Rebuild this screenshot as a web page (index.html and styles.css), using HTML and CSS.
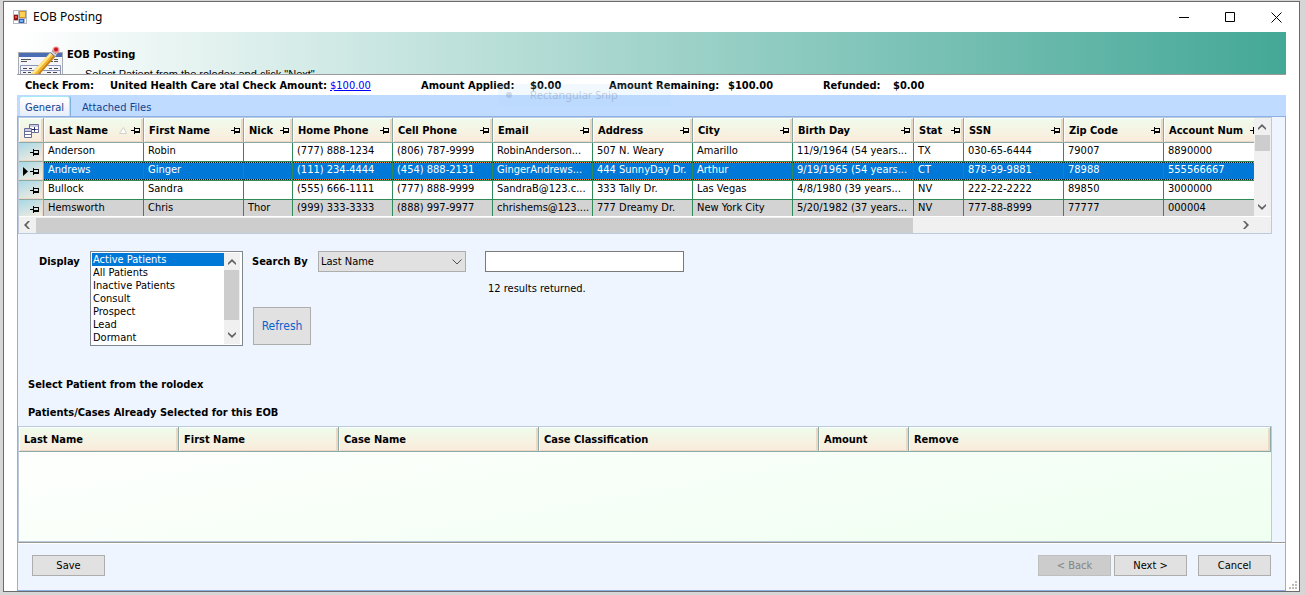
FILE: index.html
```html
<!DOCTYPE html>
<html lang="en">
<head>
    <meta charset="UTF-8">
    <meta name="viewport" content="width=device-width, initial-scale=1.0">
    <title>EOB Posting</title>
    <link rel="stylesheet" href="styles.css">
</head>
<body>
    <!-- Shared icons -->
    <svg class="sprite" aria-hidden="true">
        <symbol id="pin" viewBox="0 0 9 7">
            <path d="M0 3h3v1H0zM3 0h1v7H3zM4 1h5v1H4zM8 2h1v4H8zM4 4h4v2H4z"/>
        </symbol>
        <symbol id="chevron-up" viewBox="0 0 8 6">
            <path d="M4 0l4 4v2L4 2.500 0 6V4z"/>
        </symbol>
        <symbol id="chevron-down" viewBox="0 0 8 6">
            <path d="M4 6l4-4V0L4 3.500 0 0v2z"/>
        </symbol>
        <symbol id="chevron-left" viewBox="0 0 6 8">
            <path d="M0 4l4 4h2L2.500 4 6 0H4z"/>
        </symbol>
        <symbol id="chevron-right" viewBox="0 0 6 8">
            <path d="M6 4L2 8H0l3.500-4L0 0h2z"/>
        </symbol>
    </svg>

    <div class="window">
        <header class="titlebar">
            <svg class="app-icon" viewBox="0 0 14 14">
                <rect width="14" height="14" fill="#b4b8c2"/>
                <path d="M1 1h4v3H1zM1 11h4v2H1zM12 9h1v4h-1z" fill="#fff"/>
                <rect x="6" y="1" width="7" height="7" fill="#d3961c"/>
                <rect x="7" y="2" width="5" height="5" fill="#ffd257"/>
                <rect x="1" y="5" width="4" height="5" fill="#9c1010"/>
                <rect x="2" y="6" width="2" height="2" fill="#e8553d"/>
                <rect x="6" y="9" width="5" height="4" fill="#2f62c4"/>
                <rect x="7" y="10" width="3" height="2" fill="#76b0f5"/>
            </svg>
            <span class="title">EOB Posting</span>
            <button class="win-btn" aria-label="Minimize"><svg width="11" height="11"><path d="M0 5.500h10"/></svg></button>
            <button class="win-btn" aria-label="Maximize"><svg width="11" height="11"><path d="M.5.5h9v9h-9z"/></svg></button>
            <button class="win-btn" aria-label="Close"><svg width="11" height="11"><path d="M.5.5l10 10M10.500.5l-10 10"/></svg></button>
        </header>

        <div class="client">
            <div class="banner">
                <svg class="banner-icon" viewBox="0 0 45 29">
                    <rect x="0" y="6" width="45" height="23" fill="#a9adb3"/>
                    <rect x="1" y="7" width="43" height="4" fill="#4a6db3"/>
                    <rect x="1" y="11" width="43" height="18" fill="#f3f5fa"/>
                    <path d="M3 13.500h10M3 15.500h6M32 13.500h3m1 0h4M32 15.500h3m1 0h4" stroke="#555"/>
                    <path d="M2.500 19.500h40v9.500h-40zM2 24.500h41M22.500 19v10" fill="none" stroke="#8d97b8"/>
                    <path d="M5 22.500h4m2 0h3M31 22.500h3m2 0h4M5 26.500h3m2 0h3M29 26.500h4m2 0h4" stroke="#444"/>
                    <path d="M11 30L32 7l5 4-17 19z" fill="#f2b632"/>
                    <path d="M11 30L32 7l2 1.500L14.500 30z" fill="#ffe88e"/>
                    <path d="M37 11L20 30h-2L35.500 9.700z" fill="#c5811b"/>
                    <path d="M32 7l3-3.500 4.500 4L37 11z" fill="#dfe2e6"/>
                    <path d="M32.500 6.500l4.500 4M34 4.500l4.500 4" stroke="#666"/>
                    <circle cx="38" cy="4" r="3.500" fill="#e79a9a"/>
                    <circle cx="38" cy="3.500" r="2" fill="#d0141f"/>
                </svg>
                <div class="banner-text">
                    <h1>EOB Posting</h1>
                    <p>Select Patient from the rolodex and click "Next".</p>
                </div>
            </div>

            <div class="summary">
                <b>Check From:</b>
                <b>United Health Care</b>
                <b class="clipped"><span>Total Check Amount:</span></b>
                <a href="#">$100.00</a>
                <b>Amount Applied:</b>
                <b>$0.00</b>
                <b>Amount Remaining:</b>
                <b>$100.00</b>
                <b>Refunded:</b>
                <b>$0.00</b>
                <div class="snip-hint"><i></i><span>Rectangular Snip</span></div>
            </div>

            <nav class="tabs">
                <a class="tab active" href="#">General</a>
                <a class="tab" href="#">Attached Files</a>
            </nav>

            <main class="panel">
                <!-- Patient rolodex -->
                <div class="grid">
                    <div class="grid-main">
                        <div class="grid-view">
                            <table class="patients">
                                <colgroup>
                                    <col class="w25"><col class="w100"><col class="w100"><col class="w49"><col class="w100"><col class="w100"><col class="w100"><col class="w100"><col class="w100"><col class="w121"><col class="w50"><col class="w100"><col class="w100"><col>
                                </colgroup>
                                <thead>
                                    <tr>
                                        <th class="chooser">
                                            <svg width="15" height="14" fill="none" stroke="#6c6c98">
                                                <path d="M5.500.5h9v8h-9zM10.500 3v5M5 5.500h9" fill="#fff"/>
                                                <path d="M6 1h8v2H6z" fill="#c9cbe4" stroke="none"/>
                                                <path d="M.5 4.500h7v9h-7zM0 7.500h7M0 10.500h7" fill="#fff"/>
                                                <path d="M1 5h6v2H1z" fill="#c9cbe4" stroke="none"/>
                                                <path d="M8 5.500h3.500M10.500 3.500v3" stroke="#22225a"/>
                                            </svg>
                                        </th>
                                        <th><div>Last Name <svg class="sort" width="8" height="7"><path d="M.5 6.500h7L4.500.5z"/></svg><svg class="pin"><use href="#pin"/></svg></div></th>
                                        <th><div>First Name <svg class="pin"><use href="#pin"/></svg></div></th>
                                        <th><div>Nick <svg class="pin"><use href="#pin"/></svg></div></th>
                                        <th><div>Home Phone <svg class="pin"><use href="#pin"/></svg></div></th>
                                        <th><div>Cell Phone <svg class="pin"><use href="#pin"/></svg></div></th>
                                        <th><div>Email <svg class="pin"><use href="#pin"/></svg></div></th>
                                        <th><div>Address <svg class="pin"><use href="#pin"/></svg></div></th>
                                        <th><div>City <svg class="pin"><use href="#pin"/></svg></div></th>
                                        <th><div>Birth Day <svg class="pin"><use href="#pin"/></svg></div></th>
                                        <th><div>Stat <svg class="pin"><use href="#pin"/></svg></div></th>
                                        <th><div>SSN <svg class="pin"><use href="#pin"/></svg></div></th>
                                        <th><div>Zip Code <svg class="pin"><use href="#pin"/></svg></div></th>
                                        <th><div>Account Num <svg class="pin"><use href="#pin"/></svg></div></th>
                                    </tr>
                                </thead>
                                <tbody>
                                    <tr>
                                        <td class="row-head"><svg class="pin"><use href="#pin"/></svg></td>
                                        <td>Anderson</td><td>Robin</td><td></td><td>(777) 888-1234</td><td>(806) 787-9999</td><td>RobinAnderson...</td><td>507 N. Weary</td><td>Amarillo</td><td>11/9/1964 (54 years...</td><td>TX</td><td>030-65-6444</td><td>79007</td><td>8890000</td>
                                    </tr>
                                    <tr class="selected">
                                        <td class="row-head"><svg class="arrow" width="5" height="9"><path d="M0 0l5 4.500L0 9z"/></svg><svg class="pin"><use href="#pin"/></svg></td>
                                        <td>Andrews</td><td>Ginger</td><td></td><td>(111) 234-4444</td><td>(454) 888-2131</td><td>GingerAndrews...</td><td>444 SunnyDay Dr.</td><td>Arthur</td><td>9/19/1965 (54 years...</td><td>CT</td><td>878-99-9881</td><td>78988</td><td>555566667</td>
                                    </tr>
                                    <tr>
                                        <td class="row-head"><svg class="pin"><use href="#pin"/></svg></td>
                                        <td>Bullock</td><td>Sandra</td><td></td><td>(555) 666-1111</td><td>(777) 888-9999</td><td>SandraB@123.c...</td><td>333 Tally Dr.</td><td>Las Vegas</td><td>4/8/1980 (39 years...</td><td>NV</td><td>222-22-2222</td><td>89850</td><td>3000000</td>
                                    </tr>
                                    <tr class="inactive">
                                        <td class="row-head"><svg class="pin"><use href="#pin"/></svg></td>
                                        <td>Hemsworth</td><td>Chris</td><td>Thor</td><td>(999) 333-3333</td><td>(888) 997-9977</td><td>chrishems@123....</td><td>777 Dreamy Dr.</td><td>New York City</td><td>5/20/1982 (37 years...</td><td>NV</td><td>777-88-8999</td><td>77777</td><td>000004</td>
                                    </tr>
                                </tbody>
                            </table>
                        </div>
                        <div class="vscroll">
                            <svg width="8" height="6"><use href="#chevron-up"/></svg>
                            <div class="track"><div class="thumb"></div></div>
                            <svg width="8" height="6"><use href="#chevron-down"/></svg>
                        </div>
                    </div>
                    <div class="hscroll">
                        <svg width="6" height="8"><use href="#chevron-left"/></svg>
                        <div class="track"><div class="thumb"></div></div>
                        <svg width="6" height="8"><use href="#chevron-right"/></svg>
                    </div>
                </div>

                <!-- Filters -->
                <form class="filters">
                    <label class="display-label" for="display">Display</label>
                    <div class="listbox">
                        <select id="display" size="7">
                            <option selected>Active Patients</option>
                            <option>All Patients</option>
                            <option>Inactive Patients</option>
                            <option>Consult</option>
                            <option>Prospect</option>
                            <option>Lead</option>
                            <option>Dormant</option>
                        </select>
                        <div class="vscroll tall">
                            <svg width="8" height="6"><use href="#chevron-up"/></svg>
                            <div class="track"><div class="thumb"></div></div>
                            <svg width="8" height="6"><use href="#chevron-down"/></svg>
                        </div>
                    </div>
                    <div class="search">
                        <div class="search-row">
                            <label for="search-by">Search By</label>
                            <div class="combo">
                                <select id="search-by"><option>Last Name</option></select>
                                <svg width="10" height="6"><path d="M.5.5l4.500 4.500L9.500.5"/></svg>
                            </div>
                            <div class="search-box">
                                <input type="text" id="search-text" aria-label="Search text">
                                <span>12 results returned.</span>
                            </div>
                        </div>
                        <button type="button" class="btn refresh">Refresh</button>
                    </div>
                </form>

                <h2>Select Patient from the rolodex</h2>
                <h2 class="second">Patients/Cases Already Selected for this EOB</h2>

                <!-- Selected cases, empty for now -->
                <div class="grid cases-grid">
                    <table class="cases">
                        <colgroup><col class="w160"><col class="w160"><col class="w200"><col class="w280"><col class="w90"><col></colgroup>
                        <thead>
                            <tr>
                                <th>Last Name</th>
                                <th>First Name</th>
                                <th>Case Name</th>
                                <th>Case Classification</th>
                                <th>Amount</th>
                                <th>Remove</th>
                            </tr>
                        </thead>
                    </table>
                </div>

                <footer class="actions">
                    <button class="btn save">Save</button>
                    <button class="btn" disabled>&lt; Back</button>
                    <button class="btn">Next &gt;</button>
                    <button class="btn cancel">Cancel</button>
                </footer>
            </main>
        </div>
        <svg class="grip" width="9" height="9"><path d="M6 0h2v2H6zM3 3h2v2H3zM6 3h2v2H6zM0 6h2v2H0zM3 6h2v2H3zM6 6h2v2H6z"/></svg>
    </div>
</body>
</html>
```

FILE: styles.css
```css
* {
    box-sizing: border-box;
}
body {
    margin: 0;
    height: 100vh;
    padding: 1px 5px 3px 3px;
    background-color: #d6d6d6;
    font-family: "DejaVu Sans Condensed", "Noto Sans", sans-serif;
    font-size: 11px;
    line-height: 16px;
    color: #000;
}
button, input, select {
    font: inherit;
    color: inherit;
}
svg {
    display: block;
    flex: none;
}
.sprite {
    position: absolute;
    width: 0;
    height: 0;
}
.window {
    position: relative;
    height: 100%;
    display: flex;
    flex-direction: column;
    border: 1px solid #6b6b6b;
    background-color: #fff;
}

/* Title bar */
.titlebar {
    display: flex;
    align-items: center;
    height: 30px;
    flex: none;
    padding-left: 9px;
}
.app-icon {
    width: 14px;
    height: 14px;
}
.title {
    flex: 1;
    margin-left: 6px;
    font-family: "Noto Sans", sans-serif;
    font-size: 12px;
}
.win-btn {
    display: flex;
    align-items: center;
    justify-content: center;
    width: 46px;
    height: 30px;
    padding: 0;
    border: none;
    background: none;
}
.win-btn svg {
    fill: none;
    stroke: #000;
}
.client {
    flex: 1;
    min-height: 0;
    display: flex;
    flex-direction: column;
    padding: 0 13px;
}

/* Banner */
.banner {
    display: flex;
    height: 43px;
    flex: none;
    overflow: hidden;
    padding-left: 1px;
    border-bottom: 1px solid #9a9a9a;
    background: linear-gradient(90deg, #fff, #44a897);
}
.banner-icon {
    width: 45px;
    height: 29px;
    margin-top: 14px;
}
.banner-text {
    padding: 15px 0 0 4px;
}
h1, h2 {
    margin: 0;
    font-size: 11px;
}
.banner-text p {
    margin: 3px 0 0 18px;
    font-family: "Liberation Sans", sans-serif;
    white-space: nowrap;
}

/* Check summary */
.summary {
    position: relative;
    display: grid;
    grid-template-columns: 85px 110px 107px 94px 109px 79px 119px 95px 70px auto;
    height: 20px;
    flex: none;
    padding: 3px 0 0 8px;
    white-space: nowrap;
}
.summary a {
    padding-left: 3px;
    color: #00f;
}
.clipped {
    display: flex;
    justify-content: flex-end;
    overflow: hidden;
}
.snip-hint {
    position: absolute;
    left: 481px;
    top: 9px;
    z-index: 1;
    display: flex;
    align-items: center;
    width: 173px;
    height: 22px;
    background-color: rgba(170, 215, 250, 0.16);
    font-family: "Noto Sans", sans-serif;
    font-size: 11px;
    color: rgba(110, 120, 160, 0.35);
}
.snip-hint i {
    width: 6px;
    height: 6px;
    margin: 0 18px 0 8px;
    border-radius: 50%;
    background-color: rgba(110, 120, 160, 0.25);
}

/* Tabs */
.tabs {
    display: flex;
    height: 22px;
    flex: none;
    padding: 1px 0 0 2px;
    border-bottom: 1px solid #8db0e6;
    background-color: #bfdbff;
}
.tab {
    padding: 3px 5px 0 5px;
    color: #15428b;
    text-decoration: none;
    border: 1px solid transparent;
    border-bottom: none;
}
.tab + .tab {
    margin-left: 6px;
}
.tab.active {
    border-color: #a3eaf5;
    border-radius: 3px 3px 0 0;
    background: linear-gradient(#fff, #e6effa);
    box-shadow: 1px 0 0 #7fb2d8;
}

/* Main panel */
.panel {
    flex: 1;
    min-height: 0;
    display: flex;
    flex-direction: column;
    border: 1px solid #8db0e6;
    border-top: none;
    background-color: #eef5fe;
}
.grid {
    flex: none;
    margin-right: 13px;
    border: 1px solid #b9cbdc;
    background-color: #fff;
}
.grid-main {
    display: flex;
    height: 99px;
    border-bottom: 1px solid #fff;
}
.grid-view {
    flex: 1;
    min-width: 0;
    overflow: hidden;
}
table {
    width: 100%;
    table-layout: fixed;
    border-collapse: separate;
    border-spacing: 0;
}
.patients {
    width: calc(100% + 9px);
}
.w25 { width: 25px; }
.w49 { width: 49px; }
.w50 { width: 50px; }
.w90 { width: 90px; }
.w100 { width: 100px; }
.w121 { width: 121px; }
.w160 { width: 160px; }
.w200 { width: 200px; }
.w280 { width: 280px; }
th {
    height: 25px;
    padding: 1px 3px 0 5px;
    border-right: 1px solid #8aa9a7;
    border-bottom: 1px solid #8aa9a7;
    background: linear-gradient(#effcec, #fbebdb);
    box-shadow: inset 1px 1px 0 #fff, inset -2px -1px 0 #ecd9c5;
    text-align: left;
    white-space: nowrap;
}
th div {
    display: flex;
    align-items: center;
}
.pin {
    width: 9px;
    height: 7px;
    margin-left: auto;
}
.sort {
    margin-left: auto;
    fill: #fff;
    stroke: #d0d3c8;
}
.sort + .pin {
    margin-left: 4px;
}
td {
    height: 19px;
    padding: 0 0 3px 4px;
    border-right: 1px solid #2e8b57;
    border-bottom: 1px solid #2e8b57;
    line-height: 15px;
    white-space: nowrap;
    overflow: hidden;
}
.row-head {
    padding: 0 4px 0 4px;
    border-color: #8aa9a7;
    background: linear-gradient(160deg, #a8d8e6, #fbeedf);
    box-shadow: inset -1px -1px 0 #ecd9c5;
}
.arrow {
    float: left;
}
.row-head .pin {
    float: right;
    margin-top: 1px;
}
.selected td:not(.row-head) {
    color: #fff;
    background:
        repeating-linear-gradient(90deg, #1a1a1a 0 1px, #ff9430 1px 2px) top / 100% 1px no-repeat,
        repeating-linear-gradient(90deg, #1a1a1a 0 1px, #ff9430 1px 2px) bottom / 100% 1px no-repeat,
        #0078d7;
    background-clip: padding-box;
}
.inactive td:not(.row-head) {
    background-color: #d3d3d3;
}

/* Scroll bars */
.vscroll, .hscroll {
    display: flex;
    align-items: center;
    flex: none;
    background-color: #f0f0f0;
    fill: #606060;
}
.vscroll {
    flex-direction: column;
    width: 17px;
    padding: 6px 1px 6px 0;
}
.track {
    flex: 1;
}
.thumb {
    background-color: #cdcdcd;
}
.vscroll .track {
    width: 15px;
    padding-top: 5px;
}
.vscroll .thumb {
    height: 16px;
}
.vscroll.tall {
    width: 16px;
}
.vscroll.tall .thumb {
    height: 50px;
}
.hscroll {
    height: 16px;
    padding: 0 22px 0 5px;
}
.hscroll .track {
    padding: 0 6px;
}
.hscroll .thumb {
    width: 73%;
    height: 15px;
}

/* Filters */
.filters {
    display: flex;
    flex: none;
    margin-top: 17px;
    padding-left: 21px;
}
.filters label {
    padding-top: 3px;
    font-weight: bold;
}
.display-label {
    width: 51px;
}
.listbox {
    display: flex;
    width: 153px;
    height: 95px;
    padding: 1px 2px 1px 1px;
    border: 1px solid #7f8790;
    background-color: #fff;
}
.listbox select {
    flex: 1;
    min-width: 0;
    padding: 0;
    border: none;
    border-radius: 0;
    outline: none;
    overflow: hidden;
    background-color: #fff;
}
.listbox option {
    min-height: 13px;
    padding: 0 1px;
    line-height: 13px;
}
.listbox option:checked {
    background: linear-gradient(#0078d7, #0078d7);
    -webkit-text-fill-color: #fff;
}
.search {
    display: flex;
    flex-direction: column;
    align-items: flex-start;
    margin-left: 9px;
}
.search-row {
    display: flex;
    height: 56px;
}
.search-row label {
    width: 66px;
}
.combo {
    position: relative;
    width: 148px;
    height: 21px;
    margin-right: 19px;
}
.combo select {
    width: 100%;
    height: 100%;
    padding: 1px 2px 0 2px;
    appearance: none;
    border: 1px solid #adadad;
    border-radius: 0;
    background-color: #e1e1e1;
}
.combo svg {
    position: absolute;
    right: 4px;
    top: 8px;
    fill: none;
    stroke: #505050;
    pointer-events: none;
}
.search-box input {
    display: block;
    width: 199px;
    height: 21px;
    border: 1px solid #7a7a7a;
    background-color: #fff;
}
.search-box span {
    display: block;
    padding: 9px 0 0 3px;
}
.btn {
    width: 73px;
    height: 21px;
    padding: 0;
    border: 1px solid #adadad;
    background-color: #e1e1e1;
}
.btn:disabled {
    border-color: #bfbfbf;
    background-color: #ccc;
    color: #838383;
}
.btn.refresh {
    width: 58px;
    height: 38px;
    margin-left: 1px;
    font-size: 12px;
    color: #0c62cc;
}
h2 {
    margin: 31px 0 0 10px;
}
h2.second {
    margin-top: 12px;
}

/* Selected cases */
.cases-grid {
    flex: 1;
    min-height: 0;
    margin-top: 5px;
    background: linear-gradient(170deg, #fff, #effff0);
}
.actions {
    display: flex;
    flex: none;
    height: 48px;
    padding: 12px 14px 0 14px;
    border-top: 1px solid #9a9a9a;
    box-shadow: inset 0 1px 0 #fff;
    gap: 3px;
}
.save {
    margin-right: auto;
}
.cancel {
    margin-left: 8px;
}
.grip {
    position: absolute;
    right: 1px;
    bottom: 1px;
    fill: #bdbdbd;
}
```
